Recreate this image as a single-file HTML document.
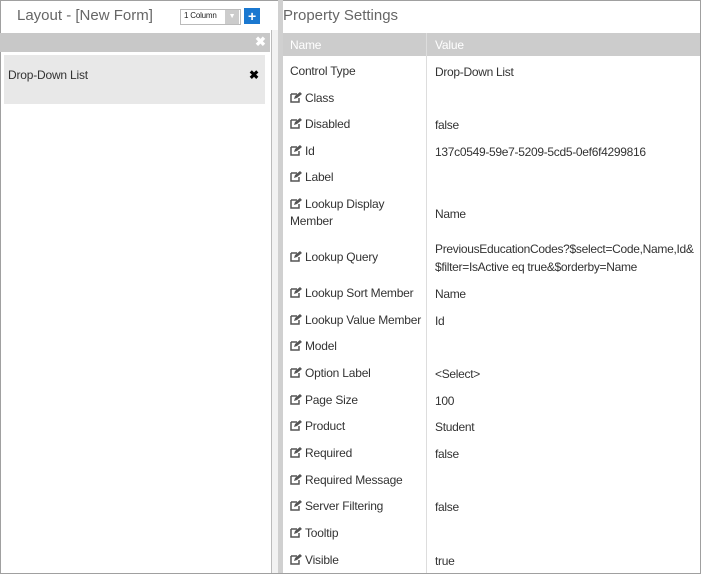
<!DOCTYPE html>
<html><head><style>
body{margin:0;width:701px;height:574px;overflow:hidden;background:#fff;font-family:"Liberation Sans",sans-serif;font-size:12px;color:#333;position:relative;letter-spacing:-0.2px}
.a{position:absolute}
.r{position:absolute;left:290px;white-space:nowrap}
.v{position:absolute;left:435px;white-space:nowrap}
svg{vertical-align:-1px;margin-right:3px}
</style></head><body>
<div class="a" style="left:0;top:0;width:699px;height:572px;border:1px solid #a0a0a0"></div>
<div class="a" style="left:17px;top:7px;font-size:15px;color:#666;letter-spacing:0">Layout - [New Form]</div>
<div class="a" style="left:180px;top:9px;width:59px;height:14px;border:1px solid #bbb;background:#fff"></div>
<div class="a" style="left:184px;top:11px;font-size:8px;color:#222">1 Column</div>
<div class="a" style="left:225px;top:10px;width:14px;height:14px;background:#ccc;color:#fff;font-size:7px;text-align:center;line-height:14px">▼</div>
<div class="a" style="left:244px;top:8px;width:16px;height:16px;background:#1a78d0;color:#fff;font-weight:bold;font-size:14px;text-align:center;line-height:16px">+</div>
<div class="a" style="left:0;top:33px;width:270px;height:19px;background:#c8c8c8"></div>
<div class="a" style="left:255px;top:34px;color:#fff;font-weight:bold;font-size:13px">✖</div>
<div class="a" style="left:4px;top:55px;width:261px;height:49px;background:#e8e8e8"></div>
<div class="a" style="left:8px;top:68px">Drop-Down List</div>
<div class="a" style="left:249px;top:68px;font-size:12px;color:#000;font-weight:bold">✖</div>
<div class="a" style="left:271px;top:30px;width:1px;height:543px;background:#bbb"></div>
<div class="a" style="left:272px;top:30px;width:6px;height:543px;background:#f2f2f2"></div>
<div class="a" style="left:278px;top:0;width:5px;height:573px;background:#d0d0d0"></div>
<div class="a" style="left:283px;top:1px;width:417px;height:30px;background:#fff"></div>
<div class="a" style="left:283px;top:7px;font-size:15px;color:#666;letter-spacing:0">Property Settings</div>
<div class="a" style="left:283px;top:33px;width:417px;height:23px;background:#ccc"></div>
<div class="a" style="left:426px;top:33px;width:1px;height:540px;background:#ddd"></div>
<div class="r" style="top:38px;color:#fff">Name</div>
<div class="v" style="top:38px;color:#fff">Value</div>
<div id="rows"></div>
<script>
var E='<svg width="12" height="11" viewBox="0 0 12 11"><path d="M1 2h6M1 2v8h8V6" fill="none" stroke="#555" stroke-width="1.5"/><path d="M4 7l1-3 5-4 2 2-5 4z" fill="#555"/></svg>';
var d=[["Control Type","Drop-Down List",71,0],["Class","",98],["Disabled","false",124],["Id","137c0549-59e7-5209-5cd5-0ef6f4299816",151],["Label","",177],["Lookup Display<br>Member","Name",213,1],["Lookup Query","PreviousEducationCodes?$select=Code,Name,Id&amp;<br>$filter=IsActive eq true&amp;$orderby=Name",257,2],["Lookup Sort Member","Name",293],["Lookup Value Member","Id",320],["Model","",346],["Option Label","&lt;Select&gt;",373],["Page Size","100",400],["Product","Student",426],["Required","false",453],["Required Message","",480],["Server Filtering","false",506],["Tooltip","",533],["Visible","true",560]];
var h='';d.forEach(function(x){var t=x[2]-8;var n=x[3]===0?x[0]:E+x[0];
var nt=x[3]==1?t-9:t;h+='<div class="r" style="top:'+nt+'px;line-height:17px">'+n+'</div>';
var vt=x[3]==2?t-9:t;h+='<div class="v" style="top:'+vt+'px;line-height:18px;letter-spacing:-0.3px">'+x[1]+'</div>';});
document.getElementById('rows').innerHTML=h;
</script>
</body></html>
